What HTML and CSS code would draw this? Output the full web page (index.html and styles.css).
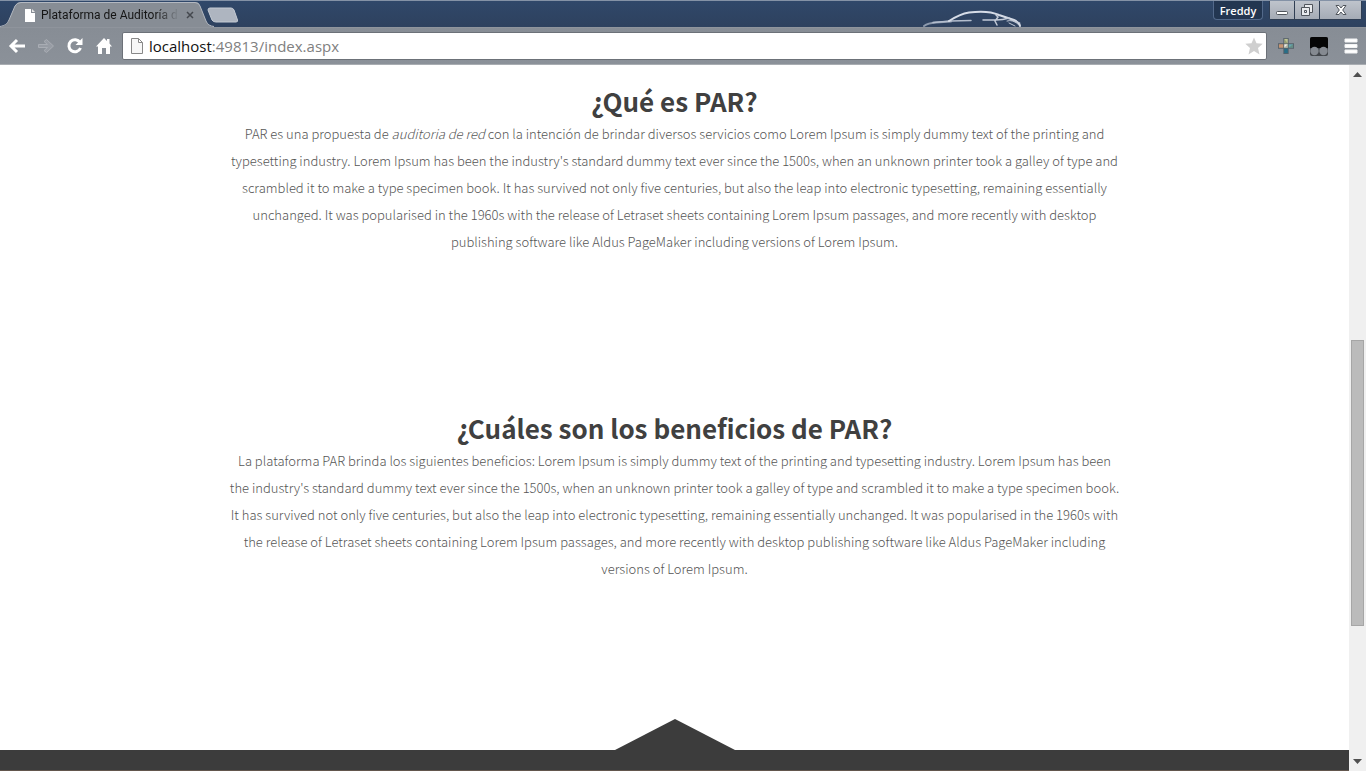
FILE: index.html
```html
<!DOCTYPE html>
<html lang="es">
<head>
<meta charset="utf-8">
<title>Plataforma de Auditoría de Red</title>
<link rel="stylesheet" href="styles.css">
</head>
<body>
<div class="browser">
  <header class="tabstrip">
    <div class="tab">
      <svg class="tab-shape" width="216" height="26" viewBox="0 0 216 26" aria-hidden="true">
        <path d="M0 26C5 25 7 23 9 19L15 5Q17 1 21 1H195Q199 1 200 5L206 20Q208 25 214 26Z" fill="#878d95"/>
        <path d="M0 25.500C5 24.500 7 23 9 19L15 5Q17 1.500 21 1.500H195Q199 1.500 200 5L206 20Q208 25 214 25.500" fill="none" stroke="#b3b8c0"/>
      </svg>
      <div class="tab-content">
        <svg width="10" height="13" viewBox="0 0 10 13" aria-hidden="true"><path d="M0 0H6V4H10V13H0Z" fill="#fff"/><path d="M7 0L10 3H7Z" fill="#e8e8e8"/></svg>
        <span class="tab-title">Plataforma de Auditoría d</span>
        <button class="icon-button tab-close" aria-label="Cerrar pestaña"><svg width="8" height="8" viewBox="0 0 8 8"><path d="M1 1L7 7M7 1L1 7" stroke="#44484e" stroke-width="1.500"/></svg></button>
      </div>
    </div>
    <button class="icon-button new-tab" aria-label="Nueva pestaña"><svg width="32" height="16" viewBox="0 0 32 16"><path d="M3 1H24Q26 1 27 3L30.500 13Q31 15 29 15H9Q6 15 5 13L1 3Q1 1 3 1Z" fill="#aeb5c0" stroke="#c4cad3"/></svg></button>
    <svg class="car" width="100" height="18" viewBox="0 0 100 18" aria-hidden="true" fill="none" stroke-linecap="round">
      <path d="M1 17Q5 14 13 13.500L28 12.500" stroke="#8d9aad" stroke-width="2"/>
      <path d="M10 13.500L28 12L48 11.500" stroke="#b4bece" stroke-width="1.500"/>
      <path d="M26 12Q37 5 46 3.500Q65 1 76 6L91 11Q97 14 97 17" stroke="#d6dce7" stroke-width="2"/>
      <path d="M60 11H73Q80 11 86 9M73 6L75 8L72 12L74 16" stroke="#c2cad7" stroke-width="1.500"/>
      <path d="M84 12Q90 10 96 16M86 14L92 17M88 11L97 14" stroke="#c2cad7"/>
    </svg>
    <button class="user">Freddy</button>
    <div class="window-buttons">
      <button class="icon-button win" aria-label="Minimizar"><svg width="14" height="14" viewBox="0 0 14 14"><rect x="1.500" y="8.500" width="11" height="3" rx="1" fill="#fff" stroke="#50555c"/></svg></button>
      <button class="icon-button win" aria-label="Restaurar"><svg width="14" height="14" viewBox="0 0 14 14"><path d="M4.500 4.500V1.500H12.500V9.500H9.500M1.500 4.500H9.500V12.500H1.500ZM4.500 7.500H6.500V9.500H4.500Z" fill="#e9ebee" stroke="#50555c"/></svg></button>
      <button class="icon-button win win-close" aria-label="Cerrar"><svg width="14" height="14" viewBox="0 0 14 14"><path d="M2 2.500H5L7 5L9 2.500H12L8.700 7L12 11.500H9L7 9L5 11.500H2L5.300 7Z" fill="#fff" stroke="#50555c"/></svg></button>
    </div>
  </header>
  <nav class="toolbar">
    <button class="icon-button" aria-label="Atrás"><svg width="18" height="18" viewBox="0 0 18 18"><path d="M9 3L3 9L9 15M3 9H17" fill="none" stroke="#fff" stroke-width="3"/></svg></button>
    <button class="icon-button" aria-label="Adelante"><svg width="18" height="18" viewBox="0 0 18 18"><path d="M1.500 7.500H10.500L7 4.500L9.500 2.500L16.500 9L9.500 15.500L7 13.500L10.500 10.500H1.500Z" fill="#979ca4" stroke="#a9adb4"/></svg></button>
    <button class="icon-button" aria-label="Recargar"><svg width="18" height="18" viewBox="0 0 18 18"><path d="M14 5.500A6 6 0 1 0 14.500 11" fill="none" stroke="#fff" stroke-width="3"/><path d="M16.500 1V8H9.500Z" fill="#fff"/></svg></button>
    <button class="icon-button" aria-label="Inicio"><svg width="18" height="18" viewBox="0 0 18 18"><path d="M9 1L12 4V2H14.500V6.500L17 9.500H15V17H11V11H7V17H3V9.500H1Z" fill="#fff"/></svg></button>
    <div class="address">
      <svg width="12" height="16" viewBox="0 0 12 16" aria-hidden="true"><path d="M.5.5H7.500L11.500 4.500V15.500H.5ZM7.500.5V4.500H11.500" fill="#f7f7f7" stroke="#888"/></svg>
      <span class="url" role="textbox" aria-label="Dirección" contenteditable="true" spellcheck="false"><span class="host">localhost</span>:49813/index.aspx</span>
      <button class="icon-button star" aria-label="Marcador"><svg width="18" height="18" viewBox="0 0 18 18"><path d="M9 .5L11.500 6.300L17.700 6.800L13 11L14.500 17.500L9 14L3.500 17.500L5 11L.3 6.800L6.500 6.300Z" fill="#cfcfcf"/></svg></button>
    </div>
    <div class="extensions">
      <button class="icon-button" aria-label="Extensión"><svg width="16" height="18" viewBox="0 0 18 18"><path d="M6 0H12V6H18V12H12V18H6V12H0V6H6Z" fill="#56616a"/><path d="M7 1H11V6H7Z" fill="#bec493"/><path d="M1 7H6V11H1Z" fill="#c69572"/><path d="M7 7H11V11H7Z" fill="#f0eee4"/><path d="M12 7H17V11H12Z" fill="#67a6ae"/><path d="M7 12H11V17H7Z" fill="#286e87"/><path d="M7 1L11 6H7ZM12 11L17 7V11ZM7 11L11 7V11Z" fill="#667050" opacity=".45"/></svg></button>
      <button class="icon-button" aria-label="Extensión de lectura"><svg width="18" height="19" viewBox="0 0 18 19"><rect width="18" height="19" rx="2" fill="#42464b"/><path d="M2 0H16Q18 0 18 2V11H0V2Q0 0 2 0Z" fill="#050505"/><circle cx="4.500" cy="14" r="4.200" fill="#858a91"/><circle cx="13.500" cy="14" r="4.200" fill="#858a91"/></svg></button>
      <button class="icon-button" aria-label="Menú"><svg width="14" height="16" viewBox="0 0 14 16"><path d="M1 1H13V4H1ZM1 6.500H13V9.500H1ZM1 12H13V15H1Z" fill="#fff" stroke="#f2f3f4"/></svg></button>
    </div>
  </nav>
  <div class="viewport">
    <main class="page">
      <section class="block">
        <h2>¿Qué es PAR?</h2>
        <p>PAR es una propuesta de <em>auditoria de red</em> con la intención de brindar diversos servicios como Lorem Ipsum is simply dummy text of the printing and<br>
        typesetting industry. Lorem Ipsum has been the industry's standard dummy text ever since the 1500s, when an unknown printer took a galley of type and<br>
        scrambled it to make a type specimen book. It has survived not only five centuries, but also the leap into electronic typesetting, remaining essentially<br>
        unchanged. It was popularised in the 1960s with the release of Letraset sheets containing Lorem Ipsum passages, and more recently with desktop<br>
        publishing software like Aldus PageMaker including versions of Lorem Ipsum.</p>
      </section>
      <section class="block">
        <h2>¿Cuáles son los beneficios de PAR?</h2>
        <p>La plataforma PAR brinda los siguientes beneficios: Lorem Ipsum is simply dummy text of the printing and typesetting industry. Lorem Ipsum has been<br>
        the industry's standard dummy text ever since the 1500s, when an unknown printer took a galley of type and scrambled it to make a type specimen book.<br>
        It has survived not only five centuries, but also the leap into electronic typesetting, remaining essentially unchanged. It was popularised in the 1960s with<br>
        the release of Letraset sheets containing Lorem Ipsum passages, and more recently with desktop publishing software like Aldus PageMaker including<br>
        versions of Lorem Ipsum.</p>
      </section>
      <div class="divider">
        <svg width="120" height="31" viewBox="0 0 120 31" aria-hidden="true"><path d="M0 31L60 0L120 31Z" fill="#3c3c3c"/></svg>
        <div class="band"></div>
      </div>
    </main>
    <div class="scrollbar" aria-hidden="true">
      <svg width="9" height="5" viewBox="0 0 9 5"><path d="M0 5L4.500 0L9 5Z" fill="#505050"/></svg>
      <div class="track"><div class="thumb"></div></div>
      <svg width="9" height="5" viewBox="0 0 9 5"><path d="M0 0L4.500 5L9 0Z" fill="#505050"/></svg>
    </div>
  </div>
</div>
</body>
</html>
```
FILE: styles.css
```css
* { box-sizing: border-box; }
body {
  margin: 0;
  background: #fff;
  font-family: "Noto Sans", "Liberation Sans", sans-serif;
}
.browser {
  display: flex;
  flex-direction: column;
  height: 100vh;
  overflow: hidden;
}
.icon-button {
  display: flex;
  align-items: center;
  justify-content: center;
  padding: 0;
  border: 0;
  background: none;
}
.tabstrip {
  display: flex;
  align-items: flex-start;
  height: 27px;
  flex: none;
  background: linear-gradient(#30486a, #2e415e);
  border-top: 1px solid #8492a6;
}
.tab {
  display: grid;
  width: 216px;
}
.tab-shape, .tab-content { grid-area: 1 / 1; }
.tab-content {
  display: flex;
  align-items: center;
  padding: 2px 21px 0 25px;
}
.tab-title {
  width: 138px;
  margin: 0 7px 0 6px;
  white-space: nowrap;
  font: 12px Roboto, sans-serif;
  color: #151515;
  -webkit-mask-image: linear-gradient(90deg, #000 115px, transparent);
  mask-image: linear-gradient(90deg, #000 115px, transparent);
}
.new-tab { margin: 6px auto 0 -9px; }
.car { align-self: flex-end; margin-right: 190px; }
.user {
  height: 19px;
  width: 50px;
  padding: 0;
  margin-right: 6px;
  border: 1px solid #53698a;
  border-top: 0;
  border-radius: 0 0 4px 4px;
  background: #233651;
  color: #fff;
  font: 600 11px "Open Sans", sans-serif;
}
.window-buttons {
  display: flex;
  gap: 1px;
  height: 19px;
  margin-right: 4px;
  padding: 0 1px 1px;
  border-radius: 0 0 4px 4px;
  background: #303e53;
}
.win { width: 24px; background: linear-gradient(#bfc4cc, #a5abb5); }
.win-close { width: 41px; }
.toolbar {
  display: flex;
  align-items: center;
  gap: 11px;
  height: 38px;
  flex: none;
  padding: 0 8px;
  background: linear-gradient(#878d95, #8b9199);
  border-top: 1px solid #8f949c;
  border-bottom: 1px solid #a9adb2;
}
.address {
  display: flex;
  align-items: center;
  flex: 1;
  height: 28px;
  margin-left: -2px;
  padding: 0 3px 0 8px;
  border: 1px solid #6c7178;
  border-radius: 2px;
  background: #fff;
}
.url {
  flex: 1;
  margin-left: 6px;
  outline: 0;
  font: 15px "Open Sans", sans-serif;
  color: #808080;
}
.host { color: #111; }
.extensions {
  display: flex;
  align-items: center;
  gap: 16px;
}
.viewport {
  display: flex;
  flex: 1;
  min-height: 0;
}
.page {
  display: flex;
  flex-direction: column;
  flex: 1;
  padding-top: 18px;
  overflow: hidden;
}
.block {
  margin-bottom: 155px;
  text-align: center;
  font-family: "Noto Sans CJK SC", "Noto Sans", sans-serif;
}
.block + .block { margin-bottom: 0; }
.block h2 {
  margin: 0 0 1px;
  font-size: 26px;
  font-weight: 700;
  line-height: 36px;
  color: #404040;
}
.block p {
  margin: 0;
  font-size: 13px;
  font-weight: 300;
  line-height: 27px;
  white-space: nowrap;
  color: #555;
}
.divider {
  display: flex;
  flex-direction: column;
  align-items: center;
  margin-top: auto;
}
.band {
  width: 100%;
  height: 21px;
  background: #3c3c3c;
  border-bottom: 1px solid #62564d;
}
.scrollbar {
  display: flex;
  flex-direction: column;
  align-items: center;
  width: 17px;
  padding: 7px 0;
  background: #f0f0f0;
}
.track {
  flex: 1;
  width: 13px;
  padding-top: 263px;
}
.thumb {
  height: 286px;
  border: 1px solid #a6a6a6;
  background: #bbb;
}
```
